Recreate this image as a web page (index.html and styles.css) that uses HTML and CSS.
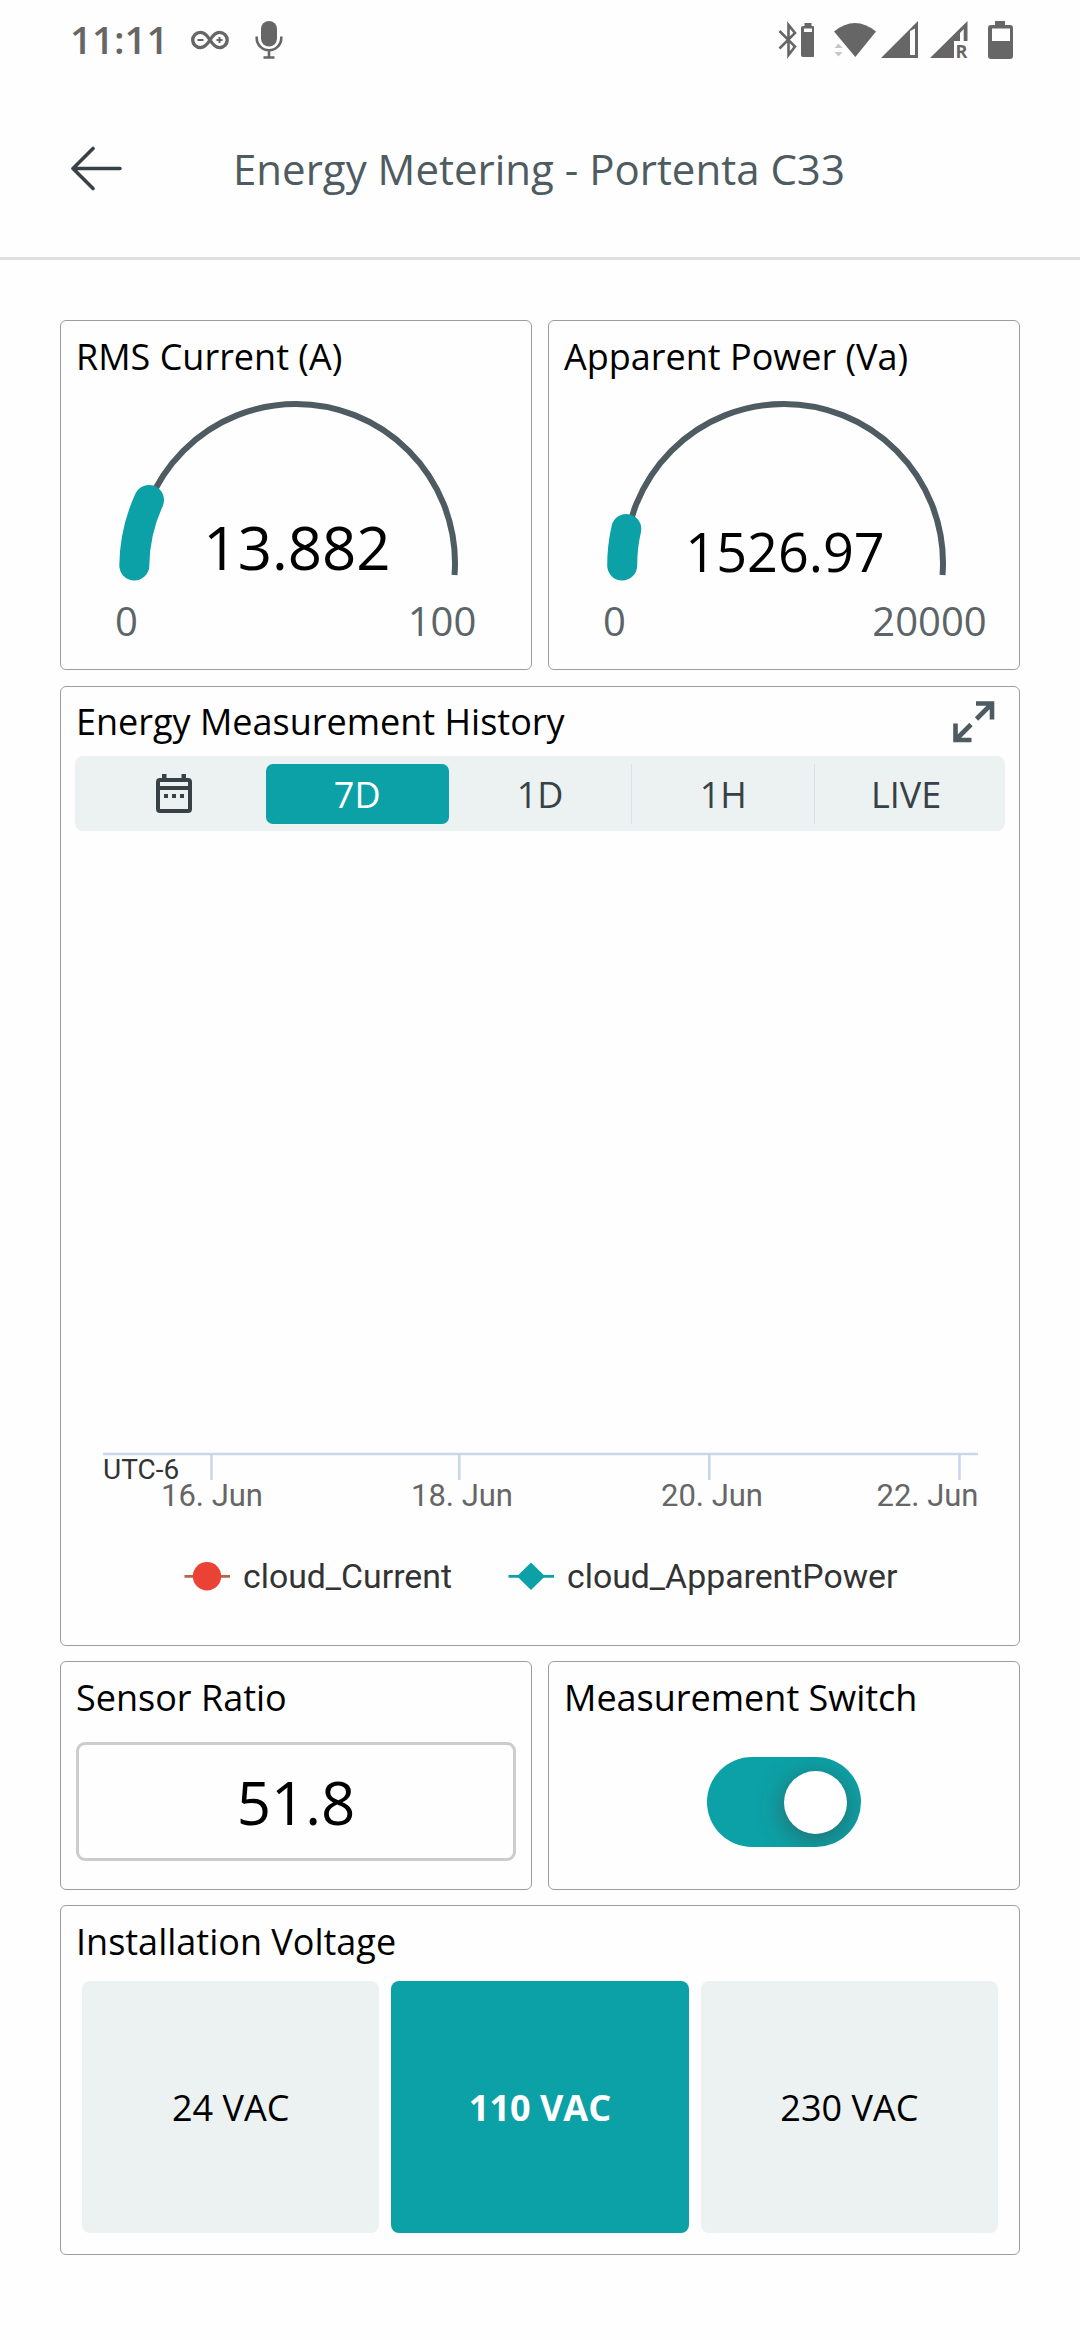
FILE: index.html
```html
<!DOCTYPE html>
<html lang="en">
<head>
<meta charset="utf-8">
<title>Energy Metering - Portenta C33</title>
<link rel="stylesheet" href="styles.css">
</head>
<body>
<div class="status">
  <span class="clock">11:11</span>
  <svg class="infinity" width="40" height="80" viewBox="190 0 40 80" fill="none" stroke="#666" stroke-width="3.400"><path d="M210 40c-3-5-5.500-7.600-9.700-7.600a7.600 7.600 0 0 0 0 15.200c4.200 0 6.700-2.600 9.700-7.600s5.500-7.600 9.600-7.600a7.600 7.600 0 0 1 0 15.200c-4.100 0-6.600-2.600-9.600-7.600z"/><path stroke-width="2" d="M197.500 40h6M216.500 40h6M219.500 37v6"/></svg>
  <svg class="mic" width="30" height="80" viewBox="254 0 30 80"><rect x="261" y="21" width="16" height="25.500" rx="8" fill="#666"/><path d="M256.700 36.500v1.500a12.300 12.300 0 0 0 24.600 0v-1.500M269 50v8M263.500 57.500h11" fill="none" stroke="#666" stroke-width="2.600"/></svg>
  <span class="spacer"></span>
  <svg width="36" height="80" viewBox="778 0 36 80"><path d="M779.500 31l15.500 15.500-6.500 8.500v-30l6.500 8-15.500 15.500" fill="none" stroke="#666" stroke-width="2.600"/><path d="M804.500 23h7v3h1q2 0 2 2v27q0 2-2 2h-9.500q-2 0-2-2V28q0-2 2-2h1.500zM804 28.500v3.500h8v-3.500z" fill="#666" fill-rule="evenodd"/></svg>
  <svg class="wifi" width="42" height="80" viewBox="834 0 42 80"><path d="M834 31.500q21-17 42 0L855.300 57z" fill="#666"/><path d="M834.500 48l4-4.500 4 4.500zM834.500 52h8l-4 4.500z" fill="#c6c6c6"/></svg>
  <svg class="signal" width="38" height="80" viewBox="881 0 38 80"><path d="M881 58L918 21v37zM910 31v24h5V28.500z" fill="#666" fill-rule="evenodd"/></svg>
  <svg class="roaming" width="38" height="80" viewBox="930 0 38 80"><path d="M930 58L967.500 21v20h-3.800V29l-3.700 4v8h-6v17z" fill="#666"/><text x="955.500" y="58" class="roam">R</text></svg>
  <svg class="battery" width="26" height="80" viewBox="988 0 26 80"><path d="M995 21h10v4h5q3 0 3 3v28q0 3-3 3h-19q-3 0-3-3V28q0-3 3-3h4zM992 28.500V41h18V28.500z" fill="#666" fill-rule="evenodd"/></svg>
</div>
<header class="topbar">
  <svg width="52" height="46" viewBox="0 0 52 46" fill="none" stroke="#374146" stroke-width="3.600" stroke-linecap="round" stroke-linejoin="round"><path d="M49 22.500H2M22 2.500L2 22.500l20 20"/></svg>
  <h1>Energy Metering - Portenta C33</h1>
</header>
<main class="board">
  <section class="card short">
    <h2>RMS Current (A)</h2>
    <svg class="gauge" width="470" height="287" viewBox="61 383 470 287">
      <path class="track" d="M137 563a159 159 0 0 1 318 0q0 6-.5 12"/>
      <path class="fill" d="M134.300 565.500A162 162 0 0 1 149 500"/>
      <text x="297" y="570" class="value">13.882</text>
      <text x="126.500" y="635.500" class="limit">0</text>
      <text x="442" y="635.500" class="limit">100</text>
    </svg>
  </section>
  <section class="card short">
    <h2>Apparent Power (Va)</h2>
    <svg class="gauge" width="470" height="287" viewBox="549 383 470 287">
      <path class="track" d="M625 563a159 159 0 0 1 318 0q0 6-.5 12"/>
      <path class="fill" d="M622.200 565.500A162 162 0 0 1 626.300 529"/>
      <text x="785" y="572" class="value small">1526.97</text>
      <text x="614.500" y="635.500" class="limit">0</text>
      <text x="929.500" y="635.500" class="limit">20000</text>
    </svg>
  </section>
  <section class="card wide history">
    <div class="heading">
      <h2>Energy Measurement History</h2>
      <svg width="42" height="42" viewBox="0 0 42 42" fill="none" stroke="#4e5b61" stroke-width="4.600"><path d="M23 2.500h16v16M38.500 3L23.500 18M2.500 22.500V39h16M3 38.500L18 23.500"/></svg>
    </div>
    <div class="tabs">
      <span class="tab"><svg width="36" height="40" viewBox="0 0 36 40"><path d="M6 0h4.500v4h15V0H30v4h2q4 0 4 4v27q0 4-4 4H4q-4 0-4-4V8q0-4 4-4h2zM4 8v4h28V8zM4 16v19h28V16z" fill="#374146" fill-rule="evenodd"/><path d="M8 20h4v4H8zM16 20h4v4h-4zM24 20h4v4h-4z" fill="#374146"/></svg></span>
      <span class="tab active">7D</span>
      <span class="tab">1D</span>
      <span class="tab ruled">1H</span>
      <span class="tab ruled">LIVE</span>
    </div>
    <svg class="chart" width="958" height="814" viewBox="61 831 958 814">
      <path d="M103 1454H978M211.500 1454v26M459.300 1454v26M709.300 1454v26M959.500 1454v26" stroke="#ccd6eb" stroke-width="2.600"/>
      <text x="103" y="1479" class="zone">UTC-6</text>
      <g class="dates">
        <text x="263" y="1506">16. Jun</text>
        <text x="513" y="1506">18. Jun</text>
        <text x="763" y="1506">20. Jun</text>
        <text x="978.500" y="1506">22. Jun</text>
      </g>
      <path d="M184.500 1576.300H230" stroke="#b5654c" stroke-width="2.800"/>
      <circle cx="207" cy="1576.300" r="14.200" fill="#ea4335"/>
      <text x="243" y="1588" class="series">cloud_Current</text>
      <path d="M508.500 1576.300H554" stroke="#0ca1a6" stroke-width="2.800"/>
      <path d="M531 1562.500l14 13.800-14 13.800-14-13.800z" fill="#0ca1a6"/>
      <text x="567" y="1588" class="series">cloud_ApparentPower</text>
    </svg>
  </section>
  <section class="card">
    <h2>Sensor Ratio</h2>
    <div class="field">51.8</div>
  </section>
  <section class="card">
    <h2>Measurement Switch</h2>
    <div class="switch"><span class="knob"></span></div>
  </section>
  <section class="card wide">
    <h2>Installation Voltage</h2>
    <div class="options">
      <span class="option">24 VAC</span>
      <span class="option chosen">110 VAC</span>
      <span class="option">230 VAC</span>
    </div>
  </section>
</main>
</body>
</html>
```
FILE: styles.css
```css
* { box-sizing: border-box; }
body { margin: 0; width: 1080px; height: 2340px; overflow: hidden; background: #fefefe; color: #000; font-family: "Open Sans", "Noto Sans", sans-serif; }
svg { display: block; flex: none; }
h1, h2 { margin: 0; font-weight: 400; white-space: nowrap; }

.status { display: flex; height: 80px; padding: 0 66px 0 70px; }
.clock { width: 96px; color: #666; font-size: 38.5px; font-weight: 560; line-height: 78px; }
.infinity { margin-left: 24px; }
.mic { margin-left: 24px; }
.spacer { flex: 1; }
.wifi { margin-left: 20px; }
.signal { margin-left: 5px; }
.roaming { margin-left: 11px; }
.battery { margin-left: 20px; }
.roam { font: 700 18px "Open Sans", sans-serif; fill: #666; }

.topbar { display: flex; align-items: center; gap: 110px; height: 180px; border-bottom: 3px solid #e0e0e0; padding: 0 0 0 71px; }
.topbar h1 { color: #4e5b61; font-size: 42px; line-height: 60px; }

.board { display: grid; grid-template-columns: 472px 472px; grid-template-rows: 351px 960px 229px 350px; column-gap: 16px; row-gap: 15px; padding: 60px 60px 0; }
.card { display: flex; flex-direction: column; border: 1px solid #9a9c9d; border-radius: 6px; padding-top: 10px; overflow: hidden; }
.short { height: 350px; }
.wide { grid-column: span 2; }
h2 { padding-left: 15px; font-size: 36px; line-height: 52px; }

.track { fill: none; stroke: #4e5b61; stroke-width: 6; }
.fill { fill: none; stroke: #0ca1a6; stroke-width: 30; stroke-linecap: round; }
.value { font-size: 60px; text-anchor: middle; }
.small { font-size: 54px; }
.limit { font-size: 40px; text-anchor: middle; fill: #5b6467; }

.history { padding-top: 9px; }
.heading { display: flex; justify-content: space-between; padding-right: 24px; height: 52px; }
.heading svg { margin-top: 5px; }
.tabs { display: grid; grid-template-columns: repeat(5, 1fr); margin: 8px 14px 0; height: 75px; padding: 8px; border-radius: 8px; background: #ecf1f1; }
.tab { display: flex; align-items: center; justify-content: center; height: 60px; color: #374146; font-size: 36px; }
.active { border-radius: 7px; background: #0ca1a6; color: #fff; }
.ruled { border-left: 1px solid #dae3e3; }
.zone { font: 28px Roboto, sans-serif; fill: #333; }
.dates { font: 31px Roboto, sans-serif; fill: #666; text-anchor: end; }
.series { font: 33.8px Roboto, sans-serif; fill: #333; }

.field { display: flex; align-items: center; justify-content: center; margin: 18px 15px 0; height: 119px; border: 3px solid #ccc; border-radius: 9px; font-size: 60px; }
.switch { display: flex; align-items: center; justify-content: flex-end; align-self: center; width: 154px; height: 90px; margin-top: 33px; padding-right: 14px; border-radius: 45px; background: #0ca1a6; overflow: hidden; }
.knob { width: 63px; height: 63px; border-radius: 50%; background: #fff; box-shadow: 0 5px 24px rgba(60, 60, 60, .55); }
.options { display: grid; grid-template-columns: repeat(3, 1fr); gap: 12px; height: 252px; margin: 13px 21px 0; }
.option { display: flex; align-items: center; justify-content: center; border-radius: 8px; background: #ecf1f1; font-size: 36px; }
.chosen { background: #0ca1a6; color: #fff; font-weight: 700; }
```
